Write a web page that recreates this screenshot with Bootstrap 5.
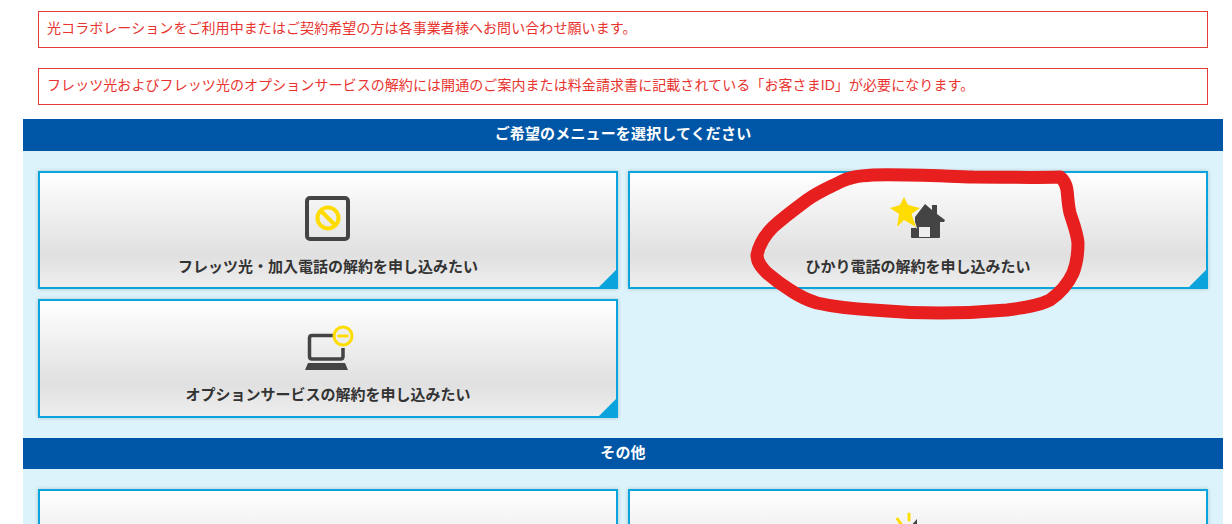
<!DOCTYPE html>
<html lang="ja">
<head>
  <meta charset="UTF-8">
  <meta name="viewport" content="width=device-width, initial-scale=1.0">
  <title>解約メニュー</title>
  <link href="https://cdn.jsdelivr.net/npm/bootstrap@5.3.1/dist/css/bootstrap.min.css" rel="stylesheet">
  <style>
    body {
      font-family: "Liberation Sans", "Noto Sans CJK JP", sans-serif;
      font-size: 14px;
      color: #333;
      background: #fff;
      height: 524px;
      overflow: hidden;
    }
    .page-wrap {
      width: 1200px;
      margin-left: 23px;
      padding-top: 11px;
    }
    .notice-box {
      margin: 0 15px 20px;
      height: 37px;
      padding: 0 8px;
      border: 1px solid #e33b36;
      color: #e8332e;
      line-height: 32px;
      letter-spacing: .075px;
    }
    .notice-box + .notice-box {
      margin-bottom: 14px;
    }
    .section-head {
      height: 32px;
      line-height: 29px;
      background: #0056a6;
      color: #fff;
      font-size: 15px;
      font-weight: 700;
      letter-spacing: .15px;
      text-align: center;
    }
    .section-head.short-head {
      height: 31px;
    }
    .section-body {
      background: #dcf3fc;
      padding: 20px 15px;
      display: grid;
      grid-template-columns: 580px 580px;
      gap: 10px;
    }
    .menu-btn {
      position: relative;
      height: 118px;
      border: 2px solid #0ba3dc;
      background: linear-gradient(#fff 0%, #e0e0e0 72%, #eeeeee 100%);
      box-shadow: 0 0 4px rgba(0, 0, 0, .2);
      display: flex;
      flex-direction: column;
      align-items: center;
      font-size: 15px;
      font-weight: 700;
      color: #333;
    }
    .menu-btn.tall-btn {
      height: 119px;
    }
    .menu-btn::after {
      content: "";
      position: absolute;
      right: 0;
      bottom: 0;
      border-style: solid;
      border-width: 0 0 17px 17px;
      border-color: transparent transparent #0ba3dc transparent;
    }
    .menu-icon {
      display: block;
      margin-top: 20px;
      height: 50px;
      overflow: visible;
    }
    .menu-label {
      margin-top: 13px;
      line-height: 22px;
    }
    .scribble {
      position: absolute;
      left: 0;
      top: 0;
      pointer-events: none;
    }
  </style>
</head>
<body>
  <div class="page-wrap">
    <div class="notice-box">光コラボレーションをご利用中またはご契約希望の方は各事業者様へお問い合わせ願います。</div>
    <div class="notice-box">フレッツ光およびフレッツ光のオプションサービスの解約には開通のご案内または料金請求書に記載されている「お客さまID」が必要になります。</div>

    <div class="section-head">ご希望のメニューを選択してください</div>
    <div class="section-body">
      <div class="menu-btn">
        <svg class="menu-icon" width="50" height="50" viewBox="0 0 50 50">
          <rect x="4" y="5" width="41" height="41" rx="3" fill="none" stroke="#444" stroke-width="4"/>
          <circle cx="25" cy="25" r="10.5" fill="none" stroke="#ffdc00" stroke-width="4"/>
          <path d="M18 18 L32 32" stroke="#ffdc00" stroke-width="4"/>
        </svg>
        <div class="menu-label">フレッツ光・加入電話の解約を申し込みたい</div>
      </div>
      <div class="menu-btn">
        <svg class="menu-icon" width="60" height="50" viewBox="0 0 60 50">
          <path d="M37 11 L44 17 V12 H49 V21 L57 27 L56 29 H52 V44 Q52 45 51 45 H24 Q23 45 23 44 V35 H27 V24 Z" fill="#444"/>
          <rect x="31" y="34" width="11" height="10" fill="#eee"/>
          <path d="M16 4 L20 12 L32 15 L23.500 21 L28 34 L16 27 L9 34 L11 21 L2 15 L12 12 Z" fill="#ffdc00" stroke="#f0f0f0" stroke-width="1.500" paint-order="stroke"/>
        </svg>
        <div class="menu-label">ひかり電話の解約を申し込みたい</div>
      </div>
      <div class="menu-btn tall-btn">
        <svg class="menu-icon" width="60" height="50" viewBox="0 0 60 50">
          <path d="M36 14.500 H14 Q11.500 14.500 11.500 17 V35.500 Q11.500 38 14 38 H42.500 Q45 38 45 35.500 V27" fill="none" stroke="#444" stroke-width="3.500"/>
          <path d="M10 42 H47 L50 49 H7 Z" fill="#444"/>
          <circle cx="45" cy="15" r="9" fill="#eee" stroke="#ffdc00" stroke-width="3"/>
          <rect x="39.500" y="13.500" width="11" height="3" fill="#ffdc00"/>
        </svg>
        <div class="menu-label">オプションサービスの解約を申し込みたい</div>
      </div>
    </div>

    <div class="section-head short-head">その他</div>
    <div class="section-body">
      <div class="menu-btn"></div>
      <div class="menu-btn">
        <svg class="menu-icon" width="60" height="50" viewBox="0 0 60 50">
          <path d="M21 3 V9 M9.500 8 L13 13" stroke="#ffdc00" stroke-width="3" stroke-linecap="round" fill="none"/>
          <path d="M22 16 L29 8 V16 Z" fill="#444"/>
        </svg>
      </div>
    </div>
  </div>

  <!-- 赤い手書きの囲み -->
  <svg class="scribble" width="1232" height="524" viewBox="0 0 1232 524">
    <path d="M1060 177 C1030 178 1000 177 973 177 C940 176 900 174 873 175 C858 176 850 177 840 182 C828 188 818 192 807 200 C795 209 784 217 773 227 C765 235 759 245 757 255 C757 262 761 267 767 273 C774 279 782 285 790 290 C799 296 807 300 817 303 C835 307 853 309 873 310 C895 312 918 313 940 313 C962 313 985 312 1007 310 C1023 308 1038 306 1050 300 C1060 293 1068 284 1073 273 C1077 263 1078 253 1078 243 C1077 232 1073 223 1070 213 C1068 205 1068 198 1067 190 C1066 184 1064 180 1060 177 Z" fill="none" stroke="#e81f1f" stroke-width="13" stroke-linejoin="round"/>
  </svg>

  <script src="https://cdn.jsdelivr.net/npm/bootstrap@5.3.1/dist/js/bootstrap.bundle.min.js"></script>
</body>
</html>
